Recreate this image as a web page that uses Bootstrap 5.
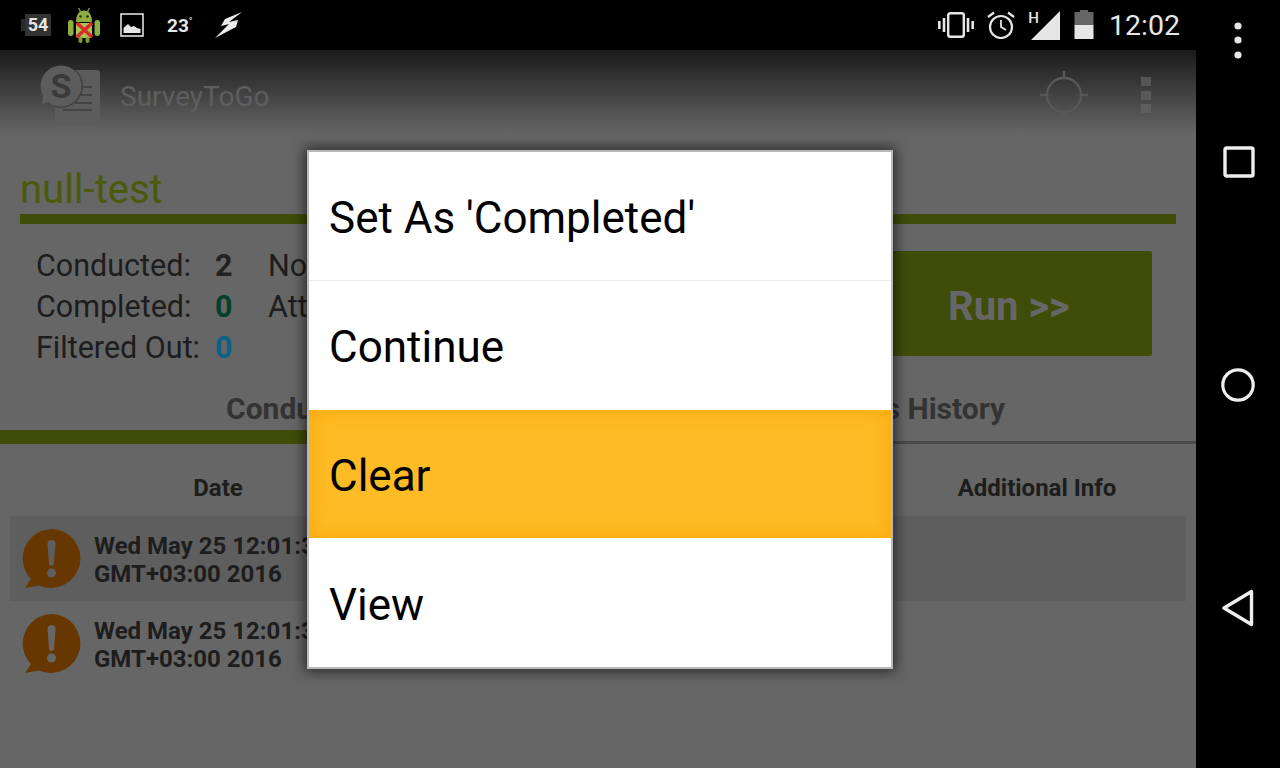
<!DOCTYPE html>
<html lang="en">
<head>
  <meta charset="UTF-8">
  <title>SurveyToGo</title>
  <link href="https://cdn.jsdelivr.net/npm/bootstrap@5.3.0/dist/css/bootstrap.min.css" rel="stylesheet">
  <style>
    html, body { width: 1280px; height: 768px; overflow: hidden; background: #000; }
    body { font-family: Roboto, "Liberation Sans", sans-serif; }
    svg { display: block; flex: none; }
    .device { width: 1280px; height: 768px; position: relative; background: #000; }
    .screen { width: 1196px; height: 768px; }
    .sysnav { width: 84px; height: 768px; padding-top: 22px; }
    .sysnav .nav-dots { margin-left: 38px; margin-bottom: 87px; }
    .sysnav .nav-square { margin-left: 27px; margin-bottom: 190px; }
    .sysnav .nav-circle { margin-left: 25px; margin-bottom: 187px; }
    .sysnav .nav-back { margin-left: 26px; }

    .statusbar { height: 50px; padding: 0 16px 0 21px; color: #e6e6e6; width: 1196px; }
    .sb-nub { width: 4px; height: 12px; background: #2a2a2a; }
    .sb-count { width: 26px; height: 22px; background: #333; color: #e6e6e6; font-size: 18px; font-weight: 700; line-height: 22px; text-align: center; }
    .sb-droid { margin-left: 17px; }
    .sb-pic { margin-left: 20px; }
    .sb-temp { font-size: 19px; font-weight: 700; line-height: 24px; width: 32px; margin-left: 23px; margin-top: 2px; }
    .sb-temp sup { font-size: 10px; top: -7px; font-weight: 400; }
    .sb-bolt { margin-left: 15px; filter: blur(.5px); }
    .sb-alarm { margin-left: 13px; }
    .sb-h { font-size: 15px; font-weight: 500; line-height: 13px; margin: -14px -8px 0 13px; }
    .sb-batt { margin-left: 13px; }
    .sb-time { font-size: 28.5px; line-height: 50px; margin: 2px 0 0 15px; color: #e6e6e6; }

    .appbar { height: 85px; background: linear-gradient(#1b1b1b, #666); padding-left: 40px; }
    .app-logo { align-self: flex-start; margin-top: 15px; }
    .app-name { font-size: 28px; color: #5e5e5e; margin-left: 20px; margin-top: 8px; }
    .app-action { margin-left: auto; margin-top: 5px; }
    .app-over { margin-left: 53px; margin-right: 45px; margin-top: 5px; }

    .content { height: 633px; background: #666; position: relative; }
    .survey-title { font-size: 40px; line-height: 44px; color: #4b5a0a; padding: 33px 0 0 20px; height: 79px; }
    .title-rule { height: 10px; background: #3f4d08; margin: 0 20px; }
    .stats { padding: 21px 44px 0 36px; height: 206px; }
    .stat-line { height: 41px; line-height: 41px; font-size: 30.5px; color: #1d1d1d; white-space: nowrap; }
    .stat-label { width: 179px; }
    .stat-num { width: 53px; font-weight: 700; color: #222; }
    .num-done { color: #04402c; }
    .num-out { color: #0b6286; }
    .stat-side { line-height: 34px; margin-top: 3.5px; }
    .run-btn { width: 600px; height: 105px; background: #3f4d08; color: #666; border: 0; border-radius: 2px; font-size: 40px; font-weight: 700; padding: 7px 0 0 396px; margin: 6px 0 0 auto; text-align: left; }

    .tabs-row { height: 58px; margin-top: -40px; }
    .tab-cell { width: 598px; }
    .tab-text { font-size: 30px; font-weight: 700; line-height: 34px; color: #333; text-align: center; padding-top: 2px; height: 40px; }
    .tab-shift { padding-left: 24px; }
    .tab-on { height: 14px; background: #3f4d08; }
    .tab-off { height: 3px; background: #4a4a4a; margin-top: 11px; }

    .col-heads { font-size: 24px; font-weight: 700; color: #1d1d1d; height: 73px; margin-top: -5px; padding-top: 27px; }
    .head-date { width: 436px; text-align: center; }
    .head-info { width: 318px; text-align: center; margin-left: auto; }
    .log-row { height: 85px; margin: 0 10px; padding-left: 12px; }
    .log-on { background: #5e5e5e; }
    .log-date { font-size: 24px; line-height: 28px; font-weight: 700; color: #1d1d1d; margin-left: 13px; padding-top: 3px; }

    .choice-box { position: absolute; left: 307px; top: 150px; width: 586px; height: 519px; background: #fff; border: 2px solid #b9b9b9; border-radius: 0; box-shadow: 0 0 12px 3px rgba(0,0,0,.55); }
    .choice-box .list-group-item { height: 128px; border: 0; border-radius: 0; padding: 3px 0 0 20px; font-size: 44px; line-height: 1; color: #000; background: #fff; display: flex; align-items: center; }
    .choice-box .choice-second { height: 130px; border-top: 1px solid #ececec; }
    .choice-box .choice-on { background: #fdbc25; box-shadow: inset 0 0 22px rgba(255,160,0,.75); }
    .choice-box .choice-last { padding-top: 5px; }
  </style>
</head>
<body>
  <div class="device d-flex">
    <div class="screen">
      <!-- status bar -->
      <div class="statusbar d-flex align-items-center">
        <div class="sb-nub"></div>
        <div class="sb-count">54</div>
        <svg class="sb-droid" width="32" height="35" viewBox="0 0 32 35">
          <path d="M10.5 0 L12.5 3.5 M21.5 0 L19.5 3.5" stroke="#7f9a36" stroke-width="1.4"/>
          <path d="M8 14 Q8 2.5 16 2.5 Q24 2.5 24 14 Z" fill="#8fae42"/>
          <circle cx="12.5" cy="8.5" r="1.3" fill="#26300c"/>
          <circle cx="19.5" cy="8.5" r="1.3" fill="#26300c"/>
          <rect x="8" y="15" width="16" height="15" rx="2" fill="#a6c458"/>
          <rect x="0" y="12" width="5.5" height="16" rx="2.7" fill="#8fae42"/>
          <rect x="26.5" y="12" width="5.5" height="16" rx="2.7" fill="#8fae42"/>
          <rect x="10.5" y="29" width="4" height="6" rx="2" fill="#7f9a36"/>
          <rect x="17.5" y="29" width="4" height="6" rx="2" fill="#7f9a36"/>
          <path d="M9 15 L24 29 M24 15 L9 29" stroke="#dc2b2b" stroke-width="3.6"/>
        </svg>
        <svg class="sb-pic" width="24" height="24" viewBox="0 0 24 24">
          <rect x="1" y="1" width="22" height="22" fill="none" stroke="#e0e0e0" stroke-width="1.6"/>
          <path d="M3.5 20 V15 L8 11 L11 14 L14 13 L17 15 L20.5 16 V20 Z" fill="#e6e6e6"/>
        </svg>
        <div class="sb-temp">23<sup>°</sup></div>
        <svg class="sb-bolt" width="30" height="28" viewBox="0 0 30 28">
          <path d="M28 1 L11 8 L7 15 L15 13 L1 27 L22 16 L24 9 L15 11 Z" fill="#ececec"/>
        </svg>
        <svg class="ms-auto" width="36" height="26" viewBox="0 0 36 26" fill="none" stroke="#e6e6e6">
          <rect x="10.2" y="1.2" width="15.6" height="23.6" rx="2" stroke-width="2.4"/>
          <path d="M6 6 V20 M30 6 V20" stroke-width="2.6"/>
          <path d="M1.3 9 V17 M34.7 9 V17" stroke-width="2.6"/>
        </svg>
        <svg class="sb-alarm" width="28" height="28" viewBox="0 0 28 28" fill="none" stroke="#e6e6e6">
          <circle cx="14" cy="16" r="11" stroke-width="2.2"/>
          <path d="M14 9 V16 L19 19" stroke-width="1.8"/>
          <path d="M1 6 L7 1.5 M27 6 L21 1.5" stroke-width="2.2"/>
        </svg>
        <div class="sb-h">H</div>
        <svg width="30" height="29" viewBox="0 0 30 29">
          <path d="M29 0 V29 H0 Z" fill="#e6e6e6"/>
        </svg>
        <svg class="sb-batt" width="20" height="30" viewBox="0 0 20 30">
          <path d="M6 0 H14 V2 H19.5 V15 H0.5 V2 H6 Z" fill="#666"/>
          <rect x="0.5" y="15" width="19" height="14" fill="#e6e6e6"/>
        </svg>
        <div class="sb-time">12:02</div>
      </div>

      <!-- action bar -->
      <div class="appbar d-flex align-items-center">
        <svg class="app-logo" width="60" height="60" viewBox="0 0 60 60">
          <defs><clipPath id="docClip"><rect x="15" y="5" width="45" height="55" rx="3"/></clipPath></defs>
          <rect x="15" y="5" width="45" height="55" rx="3" fill="#5c5c5c"/>
          <path d="M35 22 H52 M35 30 H52 M35 38 H52 M23 45 H52" stroke="#444" stroke-width="2"/>
          <circle cx="21" cy="21" r="22" fill="#404040" clip-path="url(#docClip)"/>
          <path d="M3 31 L2 39 L12 36 Z" fill="#5c5c5c"/>
          <circle cx="21" cy="21" r="20.5" fill="#5c5c5c"/>
          <text x="21" y="33" text-anchor="middle" font-family="Roboto" font-weight="700" font-size="34" fill="#3a3a3a">S</text>
        </svg>
        <div class="app-name">SurveyToGo</div>
        <svg class="app-action" width="48" height="48" viewBox="0 0 48 48" fill="none" stroke="#585858" stroke-width="2.4">
          <circle cx="24" cy="24" r="17"/>
          <path d="M24 0 V7 M24 41 V48 M0 24 H7 M41 24 H48"/>
        </svg>
        <svg class="app-over" width="10" height="37" viewBox="0 0 10 37">
          <rect width="10" height="9" fill="#565656"/>
          <rect y="14" width="10" height="9" fill="#595959"/>
          <rect y="27" width="10" height="9" fill="#5e5e5e"/>
        </svg>
      </div>

      <div class="content">
        <div class="survey-title">null-test</div>
        <div class="title-rule"></div>

        <div class="stats d-flex">
          <div>
            <div class="stat-line d-flex"><span class="stat-label">Conducted:</span><span class="stat-num">2</span><span class="stat-side">Not Finished:</span></div>
            <div class="stat-line d-flex"><span class="stat-label">Completed:</span><span class="stat-num num-done">0</span><span class="stat-side">Attempts:</span></div>
            <div class="stat-line d-flex"><span class="stat-label">Filtered Out:</span><span class="stat-num num-out">0</span></div>
          </div>
          <button type="button" class="btn run-btn">Run &gt;&gt;</button>
        </div>

        <div class="tabs-row d-flex">
          <div class="tab-cell">
            <div class="tab-text">Conducted</div>
            <div class="tab-on"></div>
          </div>
          <div class="tab-cell">
            <div class="tab-text tab-shift">Status History</div>
            <div class="tab-off"></div>
          </div>
        </div>

        <div class="col-heads d-flex">
          <div class="head-date">Date</div>
          <div class="head-info">Additional Info</div>
        </div>

        <div class="log-row log-on d-flex align-items-center">
          <svg width="59" height="60" viewBox="0 0 59 60"><path d="M29.5 0 A29.5 29.5 0 1 1 17 56.5 L3 59 L9 50 A29.5 29.5 0 0 1 29.5 0 Z" fill="#663700"/><path d="M25.5 15 Q25.5 11 29.5 11 Q33.5 11 33.5 15 L32 35 Q31.5 37 29.5 37 Q27.5 37 27 35 Z" fill="#5e5e5e"/><circle cx="29.5" cy="44" r="4.5" fill="#5e5e5e"/></svg>
          <div class="log-date">Wed May 25 12:01:33<br>GMT+03:00 2016</div>
        </div>
        <div class="log-row d-flex align-items-center">
          <svg width="59" height="60" viewBox="0 0 59 60"><path d="M29.5 0 A29.5 29.5 0 1 1 17 56.5 L3 59 L9 50 A29.5 29.5 0 0 1 29.5 0 Z" fill="#663700"/><path d="M25.5 15 Q25.5 11 29.5 11 Q33.5 11 33.5 15 L32 35 Q31.5 37 29.5 37 Q27.5 37 27 35 Z" fill="#666"/><circle cx="29.5" cy="44" r="4.5" fill="#666"/></svg>
          <div class="log-date">Wed May 25 12:01:33<br>GMT+03:00 2016</div>
        </div>
      </div>
    </div>

    <!-- system nav -->
    <div class="sysnav">
      <svg class="nav-dots" width="8" height="37" viewBox="0 0 8 37" fill="#e6e6e6"><circle cx="4" cy="4" r="3.6"/><circle cx="4" cy="18" r="3.6"/><circle cx="4" cy="33" r="3.6"/></svg>
      <svg class="nav-square" width="32" height="32" viewBox="0 0 32 32"><rect x="2" y="2" width="28" height="28" rx="1.5" fill="none" stroke="#eee" stroke-width="3.4"/></svg>
      <svg class="nav-circle" width="34" height="34" viewBox="0 0 34 34"><circle cx="17" cy="17" r="15.2" fill="none" stroke="#eee" stroke-width="3.2"/></svg>
      <svg class="nav-back" width="32" height="38" viewBox="0 0 32 38"><path d="M29.5 2.5 V35.5 L2 19 Z" fill="none" stroke="#eee" stroke-width="3.4" stroke-linejoin="round"/></svg>
    </div>

    <!-- context menu dialog -->
    <div class="choice-box list-group">
      <div class="list-group-item">Set As 'Completed'</div>
      <div class="list-group-item choice-second">Continue</div>
      <div class="list-group-item choice-on">Clear</div>
      <div class="list-group-item choice-last">View</div>
    </div>
  </div>
  <script src="https://cdn.jsdelivr.net/npm/bootstrap@5.3.0/dist/js/bootstrap.bundle.min.js"></script>
</body>
</html>
